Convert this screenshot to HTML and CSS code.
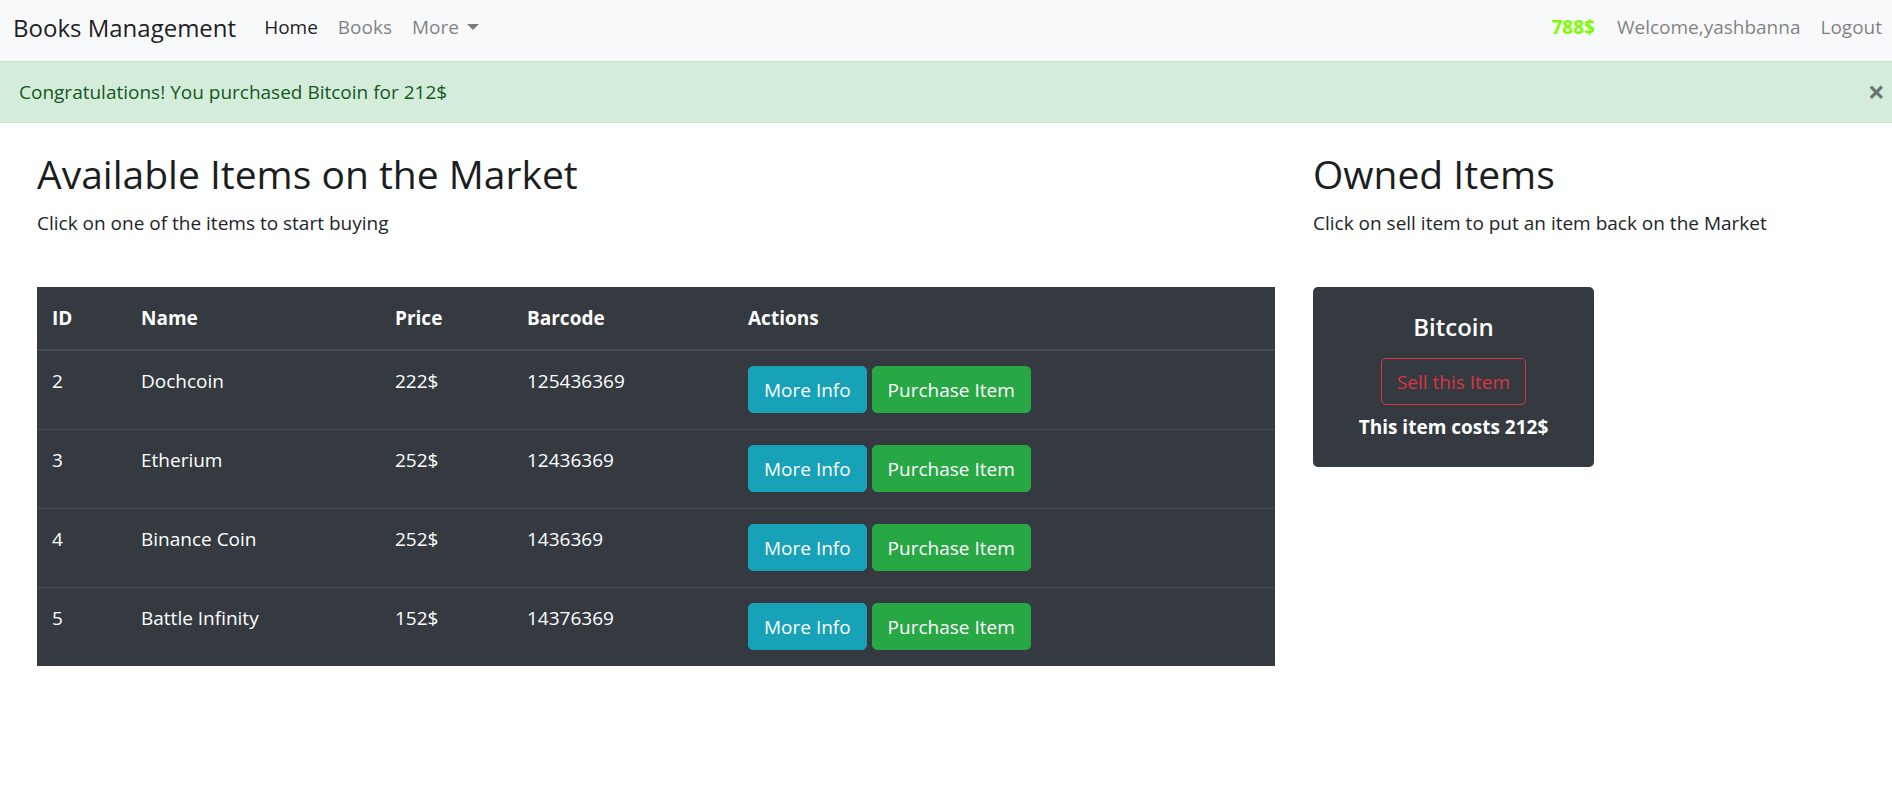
FILE: index.html
```html
<!DOCTYPE html>
<html lang="en">
<head>
<meta charset="utf-8">
<title>Market</title>
<link rel="stylesheet" href="styles.css">
</head>
<body>
<nav class="navbar">
  <div class="nav-left">
    <a class="brand" href="#">Books Management</a>
    <a class="nav-link active" href="#">Home</a>
    <a class="nav-link" href="#">Books</a>
    <a class="nav-link dropdown" href="#">More <span class="caret"></span></a>
  </div>
  <div class="nav-right">
    <span class="nav-link money">788$</span>
    <a class="nav-link" href="#">Welcome,yashbanna</a>
    <a class="nav-link" href="#">Logout</a>
  </div>
</nav>
<div class="alert">
  <span>Congratulations! You purchased Bitcoin for 212$</span>
  <button class="close" type="button">&times;</button>
</div>
<main class="content">
  <section class="market">
    <h2 class="title">Available Items on the Market</h2>
    <p class="lead-text">Click on one of the items to start buying</p>
    <table class="table">
      <thead>
        <tr><th class="c-id">ID</th><th class="c-name">Name</th><th class="c-price">Price</th><th class="c-bar">Barcode</th><th>Actions</th></tr>
      </thead>
      <tbody>
        <tr><td>2</td><td>Dochcoin</td><td>222$</td><td>125436369</td><td><button class="btn btn-info">More Info</button> <button class="btn btn-success">Purchase Item</button></td></tr>
        <tr><td>3</td><td>Etherium</td><td>252$</td><td>12436369</td><td><button class="btn btn-info">More Info</button> <button class="btn btn-success">Purchase Item</button></td></tr>
        <tr><td>4</td><td>Binance Coin</td><td>252$</td><td>1436369</td><td><button class="btn btn-info">More Info</button> <button class="btn btn-success">Purchase Item</button></td></tr>
        <tr><td>5</td><td>Battle Infinity</td><td>152$</td><td>14376369</td><td><button class="btn btn-info">More Info</button> <button class="btn btn-success">Purchase Item</button></td></tr>
      </tbody>
    </table>
  </section>
  <section class="owned">
    <h2 class="title">Owned Items</h2>
    <p class="lead-text">Click on sell item to put an item back on the Market</p>
    <div class="card">
      <h5 class="card-title">Bitcoin</h5>
      <button class="btn btn-outline-danger">Sell this Item</button>
      <p class="card-text">This item costs 212$</p>
    </div>
  </section>
</main>
</body>
</html>
```
FILE: styles.css
```css
* { box-sizing: border-box; }
html, body { margin: 0; padding: 0; }
body {
  font-family: "Open Sans", "Noto Sans", "Liberation Sans", sans-serif;
  font-size: 19px;
  line-height: 30px;
  color: #212529;
  background: #fff;
}
a { text-decoration: none; }

.navbar {
  height: 61px;
  padding: 0 0 7px 13px;
  background: #f8f9fa;
  display: flex;
  justify-content: space-between;
  align-items: center;
}
.nav-left, .nav-right { display: flex; align-items: center; }
.brand {
  font-size: 24px;
  line-height: 37px;
  color: rgba(0,0,0,.9);
  margin-right: 18px;
}
.nav-link {
  padding: 0 10px;
  color: rgba(0,0,0,.5);
  line-height: 30px;
}
.nav-link.active { color: rgba(0,0,0,.9); }
.caret {
  display: inline-block;
  width: 0; height: 0;
  margin-left: 3px;
  vertical-align: 4px;
  border-top: 6px solid rgba(0,0,0,.5);
  border-left: 6px solid transparent;
  border-right: 6px solid transparent;
}
.money { color: #7cfc00; font-weight: 700; margin-right: 2px; }

.alert {
  height: 62px;
  background: #d4edda;
  border-top: 1px solid #c3e6cb;
  border-bottom: 1px solid #c3e6cb;
  color: #155724;
  display: flex;
  align-items: center;
  justify-content: space-between;
  padding: 0 3px 0 19px;
}
.close {
  background: transparent;
  border: 0;
  font-family: inherit;
  font-size: 30px;
  font-weight: 700;
  color: #000;
  opacity: .5;
  line-height: 30px;
  padding: 0 4px;
}

.content {
  display: flex;
  padding: 0 37px;
  gap: 38px;
}
.market { width: 1238px; flex: none; }
.owned { flex: 1; }
.title {
  font-size: 39px;
  line-height: 48px;
  font-weight: 500;
  color: #1b1e21;
  margin: 27px 0 0;
}
.lead-text { margin: 10px 0 49px; }

.table {
  width: 100%;
  table-layout: fixed;
  border-collapse: collapse;
  background: #343a40;
  color: #fff;
}
.table th, .table td {
  text-align: left;
  vertical-align: top;
  padding: 15px 15px 16px;
  border-top: 1px solid #454d55;
}
.table thead th {
  border-top: 0;
  padding: 16px 15px;
  border-bottom: 2px solid #454d55;
  font-weight: 700;
}
.c-id { width: 89px; }
.c-name { width: 254px; }
.c-price { width: 132px; }
.c-bar { width: 221px; }

.btn {
  display: inline-block;
  font-family: inherit;
  font-size: 19px;
  line-height: 30px;
  padding: 8px 15px 7px;
  border: 1px solid transparent;
  border-radius: 5px;
  color: #fff;
  vertical-align: top;
}
.btn-info { background: #17a2b8; border-color: #17a2b8; }
.btn-success { background: #28a745; border-color: #28a745; }
.btn-outline-danger {
  background: transparent;
  border-color: #dc3545;
  color: #dc3545;
}

.card {
  width: 281px;
  background: #343a40;
  border-radius: 5px;
  color: #fff;
  text-align: center;
  padding: 25px 25px 25px;
}
.card-title {
  font-size: 24px;
  line-height: 30px;
  font-weight: 600;
  margin: 0 0 16px;
}
.card-text { margin: 7px 0 0; font-weight: 700; }
```
